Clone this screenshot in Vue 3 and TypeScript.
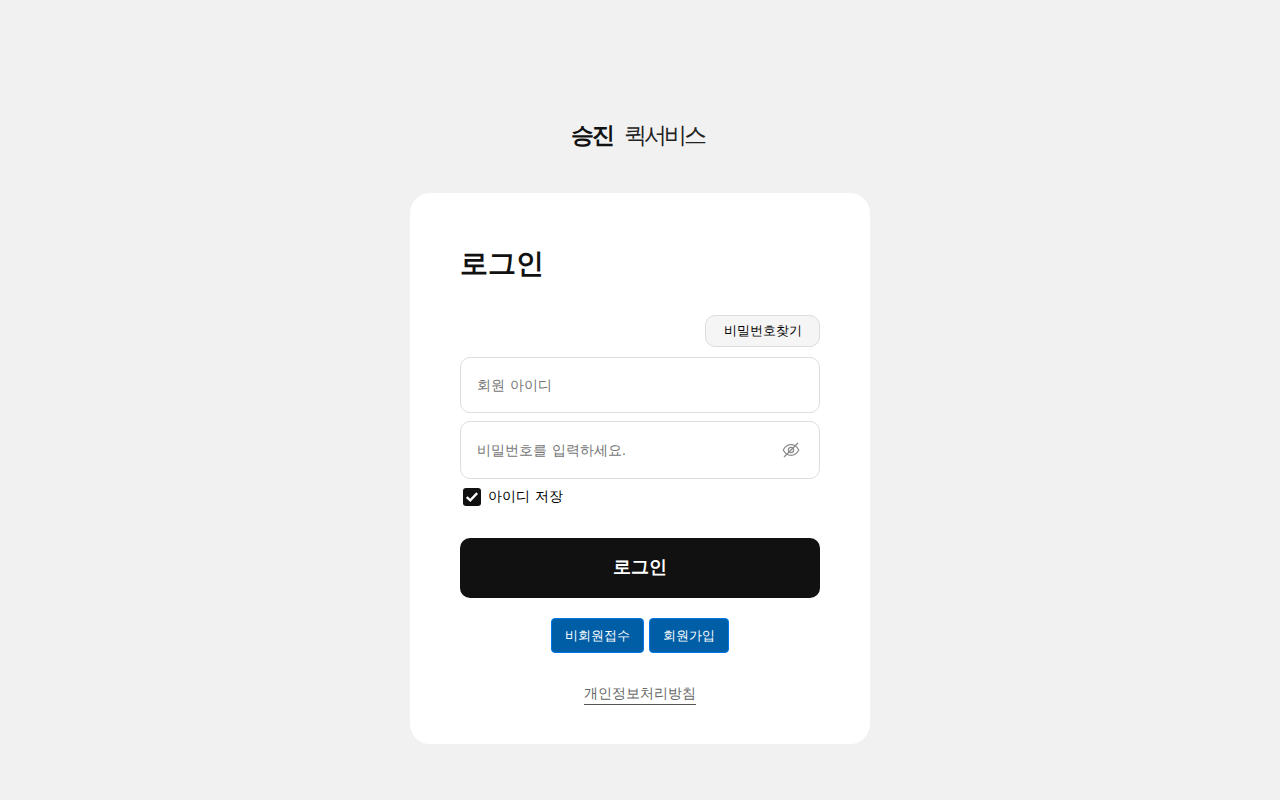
<script setup lang="ts">
import { ref } from 'vue'
const id = ref('')
const pw = ref('')
</script>

<template>
  <main class="page">
    <h1 class="logo"><b>승진</b><span>퀵서비스</span></h1>
    <section class="card">
      <h2 class="title">로그인</h2>
      <div class="find-row"><button class="find" type="button">비밀번호찾기</button></div>
      <input v-model="id" class="field id" type="text" placeholder="회원 아이디" />
      <div class="pw-wrap">
        <input v-model="pw" class="field pw" type="password" placeholder="비밀번호를 입력하세요." />
        <svg class="eye" width="18" height="18" viewBox="0 0 18 18" fill="none" stroke="#8a8a8a" stroke-width="1.2">
          <path d="M1.200 9c1.900-3.500 4.700-5.300 7.800-5.300s5.900 1.800 7.800 5.300c-1.900 3.500-4.700 5.300-7.800 5.300s-5.900-1.800-7.800-5.300z" />
          <circle cx="9" cy="9" r="2.600" />
          <path d="M16 2 2 16" />
        </svg>
      </div>
      <label class="save">
        <span class="box">
          <svg width="12" height="10" viewBox="0 0 12 10" fill="none" stroke="#fff" stroke-width="2.400" stroke-linejoin="miter"><path d="M.8 5 4.300 8.300 11.200 1.200" /></svg>
        </span>
        <span>아이디 저장</span>
      </label>
      <button class="submit" type="button">로그인</button>
      <div class="actions">
        <button class="blue" type="button">비회원접수</button>
        <button class="blue" type="button">회원가입</button>
      </div>
      <div class="policy"><a href="#">개인정보처리방침</a></div>
    </section>
  </main>
</template>

<style>
html, body { margin: 0; background: #f1f1f1; }
</style>

<style scoped>
.page {
  min-height: 800px;
  box-sizing: border-box;
  padding-top: 120px;
  display: flex;
  flex-direction: column;
  align-items: center;
  font-family: "Liberation Sans", sans-serif;
  word-spacing: 1px;
  background: #f1f1f1;
  color: #111;
}
.logo {
  margin: 0 4px 41px 0;
  height: 32px;
  line-height: 30px;
  font-size: 23px;
  font-weight: 400;
  display: flex;
  gap: 12px;
  letter-spacing: -2.800px;
  color: #111;
}
.logo b { font-weight: 700; }
.logo span { font-weight: 300; color: #222; }
.card {
  width: 460px;
  height: 551px;
  box-sizing: border-box;
  padding: 50px;
  background: #fff;
  border-radius: 20px;
}
.title {
  margin: 0 0 29px;
  height: 43px;
  line-height: 41px;
  font-size: 28px;
  font-weight: 700;
  color: #111;
}
.find-row { display: flex; justify-content: flex-end; margin-bottom: 10px; }
.find {
  width: 115px;
  height: 32px;
  padding: 0;
  border: 1px solid #ddd;
  border-radius: 10px;
  background: #f5f5f5;
  font: 400 13px "Liberation Sans", sans-serif;
  color: #000;
}
.field {
  display: block;
  width: 100%;
  box-sizing: border-box;
  padding: 0 16px;
  border: 1px solid #ddd;
  border-radius: 10px;
  background: #fff;
  outline: none;
  font: 400 14px "Liberation Sans", sans-serif;
  word-spacing: 1px;
  color: #111;
}
.field::placeholder { color: #757575; opacity: 1; }
.id { height: 56px; margin-bottom: 8px; }
.pw { height: 58px; }
.pw-wrap { position: relative; }
.eye { position: absolute; right: 20px; top: 20px; }
.save {
  display: flex;
  align-items: center;
  gap: 7px;
  height: 20px;
  margin: 8px 0 31px 3px;
  font-size: 14px;
  color: #000;
}
.box {
  width: 18px;
  height: 18px;
  border-radius: 3px;
  background: #111;
  display: flex;
  align-items: center;
  justify-content: center;
}
.submit {
  display: block;
  width: 100%;
  height: 60px;
  padding: 0 0 2px;
  border: 0;
  border-radius: 10px;
  background: #111;
  color: #fff;
  font: 700 18px "Liberation Sans", sans-serif;
}
.actions {
  display: flex;
  justify-content: center;
  gap: 5px;
  margin-top: 20px;
}
.blue {
  height: 35px;
  padding: 0 13px;
  border: 1px solid #0078e8;
  border-radius: 4px;
  background: #005ea6;
  color: #fff;
  font: 400 13px "Liberation Sans", sans-serif;
}
.policy { margin-top: 31px; text-align: center; height: 21px; }
.policy a {
  display: inline-block;
  color: #666;
  font-size: 14px;
  line-height: 16px;
  padding-bottom: 3px;
  text-decoration: none;
  border-bottom: 1px solid #555;
}
</style>
